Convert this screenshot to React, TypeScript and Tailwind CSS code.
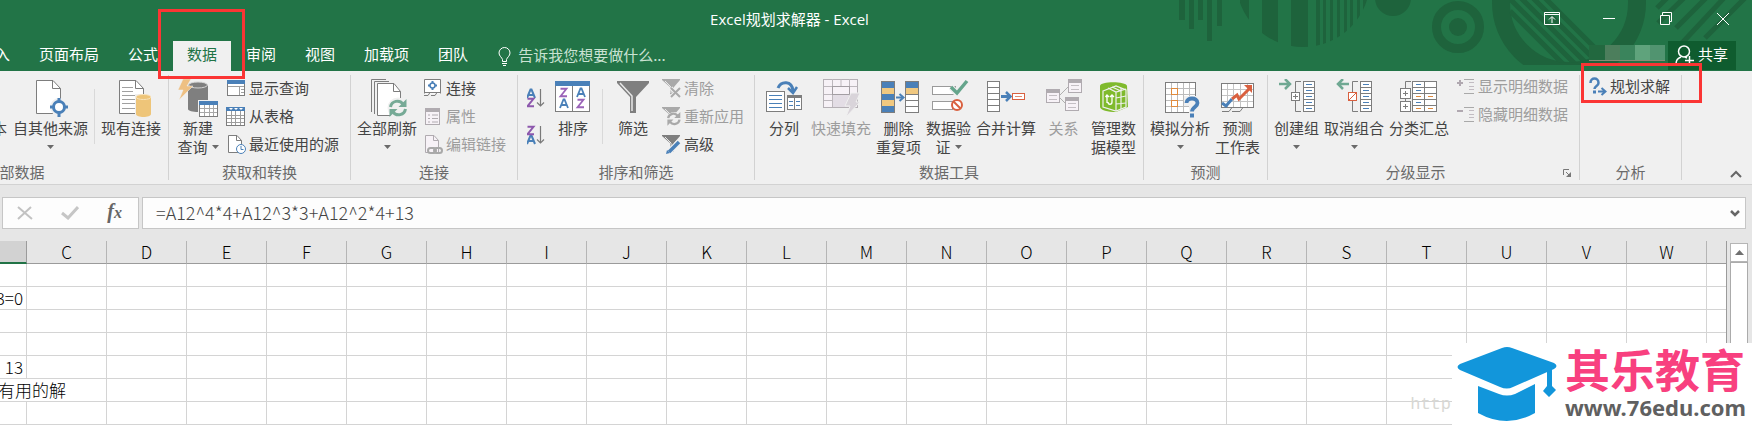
import type { ReactNode } from "react";

const GRAY = "#7d7d7d";
const BLUE = "#4a80b8";

/* ---------- large icons ---------- */

function Big({ children, w = 40 }: { children: ReactNode; w?: number }) {
  return (
    <svg width={w} height="39" viewBox={`0 0 ${w} 39`} fill="none" className="shrink-0" aria-hidden="true">
      {children}
    </svg>
  );
}

function TextFileIcon() {
  return (
    <Big>
      <path d="M12 20.500H27.500V37.500H12" fill="#fff" stroke={GRAY} />
      <path d="M12 25.500H25M12 29.500H25M12 33.500H25" stroke="#a5a5a5" />
    </Big>
  );
}

function OtherSourcesIcon() {
  return (
    <Big w={36}>
      <path d="M4.500 1.500H21L28.500 9.500V34.500H4.500Z" fill="#fff" stroke={GRAY} />
      <path d="M20.500 1.500V9.500H28.500" stroke={GRAY} />
      <circle cx="27" cy="28" r="9" fill="#f0f0f0" />
      <circle cx="27" cy="28" r="5.500" fill="#fff" stroke={BLUE} strokeWidth="3" />
      <path d="M27 19v4M27 33v5M18 28h4M32 28h4" stroke={BLUE} strokeWidth="3" />
    </Big>
  );
}

function ExistingIcon() {
  return (
    <Big>
      <path d="M8.500 1.500H25L32.500 9.500V34.500H8.500Z" fill="#fff" stroke={GRAY} />
      <path d="M24.500 1.500V9.500H32.500" stroke={GRAY} />
      <path d="M11 8.500h11M11 12.500h11M11 16.500h19M11 20.500h14M11 24.500h13M11 29.500h13" stroke="#a0a0a0" />
      <path d="M24 15h16v24h-16z" fill="#f0f0f0" />
      <path d="M25 18v17c0 4 15 4 15 0V18z" fill="#eec579" />
      <ellipse cx="32.500" cy="18" rx="7.500" ry="2.500" fill="#eec579" stroke="#f8e3bb" />
    </Big>
  );
}

function NewQueryIcon() {
  return (
    <Big w={44}>
      <path d="M12 6v24c0 4 20 4 20 0V6z" fill="#7f7f7f" />
      <ellipse cx="22" cy="6" rx="9.500" ry="3" fill="#7f7f7f" stroke="#d5d5d5" />
      <path d="M7 0h8l-4 7h6L3 21l4-10H2z" fill="#eec083" stroke="#f0f0f0" strokeWidth="0.500" />
      <rect x="22" y="21" width="22" height="18" fill="#f0f0f0" />
      <rect x="23.500" y="22.500" width="18" height="15" fill="#fff" stroke={GRAY} />
      <path d="M23 22h19v4H23z" fill={BLUE} />
      <path d="M24 29.500h17M24 33.500h17M28.500 26v11M33.500 26v11M37.500 26v11" stroke="#a8a8a8" />
    </Big>
  );
}

function RefreshArrows({ color }: { color: string }) {
  return (
    <>
      <path d="M1.500 8A7 7 0 0 1 14 5" stroke={color} strokeWidth="3" />
      <path d="M16.500 10A7 7 0 0 1 4 13" stroke={color} strokeWidth="3" />
      <path d="M17.500 0v8h-8z" fill={color} />
      <path d="M0.500 18v-8h8z" fill={color} />
    </>
  );
}

function RefreshAllIcon() {
  return (
    <Big>
      <path d="M4.500 33V0.500H19M7.500 35V2.500H22" stroke={GRAY} />
      <path d="M10.500 4.500H27L33.500 12.500V36.500H10.500Z" fill="#fff" stroke={GRAY} />
      <path d="M26.500 4.500V12.500H33.500" stroke={GRAY} />
      <circle cx="31" cy="29" r="10.500" fill="#f0f0f0" />
      <g transform="translate(22 20)"><RefreshArrows color="#76aa96" /></g>
    </Big>
  );
}

const A_PATH = "M0 9L3.500 0.500H4.500L8 9M1.500 6H6.500";
const Z_PATH = "M0.500 0.750H6.500L0.500 8.250H7";

function SortIcon() {
  return (
    <Big w={36}>
      <rect x="0.500" y="2.500" width="34" height="30" fill="#fff" stroke={GRAY} />
      <path d="M0 2h35v5H0z" fill={BLUE} />
      <path d="M17.500 7v25" stroke={GRAY} />
      <g strokeWidth="1.800">
        <path d={Z_PATH} transform="translate(5 9)" stroke="#9a63b8" />
        <path d={A_PATH} transform="translate(5 20)" stroke={BLUE} />
        <path d={A_PATH} transform="translate(22 9)" stroke={BLUE} />
        <path d={Z_PATH} transform="translate(22 20)" stroke="#9a63b8" />
      </g>
    </Big>
  );
}

function FilterIcon() {
  return (
    <Big w={32}>
      <path d="M0 2h32v2L19 18v16h-6V18L0 4z" fill="#7f7f7f" />
      <path d="M3 4l12 13v15" stroke="#e8e8e8" strokeWidth="1.500" />
    </Big>
  );
}

function TextToColumnsIcon() {
  return (
    <Big>
      <path d="M14 9C17 2 28 1 29 12" stroke={BLUE} strokeWidth="3" />
      <path d="M24 9l5 5 4-6" stroke={BLUE} strokeWidth="2.500" />
      <rect x="2.500" y="12.500" width="18" height="20" fill="#fff" stroke={GRAY} />
      <path d="M5 16.500h13M5 20.500h13M5 24.500h13M5 28.500h13" stroke={BLUE} />
      <rect x="23.500" y="16.500" width="14" height="14" fill="#fff" stroke={GRAY} />
      <path d="M23 16h15v3H23zM30 19h1v12h-1z" fill={GRAY} />
      <path d="M25 22.500h4M32 22.500h4M25 26.500h4M32 26.500h4" stroke={BLUE} />
    </Big>
  );
}

function FlashFillIcon() {
  return (
    <Big>
      <rect x="2.500" y="0.500" width="34" height="28" fill="#f7f2f7" stroke="#b5b0b5" />
      <path d="M3 7.500h33M3 15.500h33M3 21.500h33M11.500 0v28M28.500 0v28M20 0v8" stroke="#bdb8bd" />
      <rect x="12" y="16" width="16" height="12" fill="#e3dde5" />
      <rect x="11.500" y="7.500" width="17" height="8" stroke="#a39ea3" />
      <path d="M30 14h9l-4 9h4L25 38l4-11h-5z" fill="#d9d4da" stroke="#f0f0f0" />
    </Big>
  );
}

function RemoveDuplicatesIcon() {
  return (
    <Big>
      <path d="M2 2h14v31H2z" fill={BLUE} />
      <path d="M3 9h12v6H3zM3 21h12v6H3z" fill="#f0c880" />
      <rect x="2.500" y="2.500" width="13" height="31" stroke={GRAY} />
      <rect x="26.500" y="2.500" width="13" height="31" fill="#fff" stroke={GRAY} />
      <path d="M27 3h12v6H27z" fill={BLUE} />
      <path d="M27 9h12v6H27z" fill="#f0c880" />
      <path d="M27 15.500h12M27 21.500h12M27 27.500h12" stroke={GRAY} />
      <path d="M17 18.500h6" stroke={BLUE} strokeWidth="2" />
      <path d="M20.500 15l4 3.500-4 3.500" stroke={BLUE} strokeWidth="2" />
    </Big>
  );
}

function ValidationIcon() {
  return (
    <Big>
      <rect x="3.500" y="7.500" width="23" height="8" fill="#fff" stroke="#9a9a9a" />
      <rect x="3.500" y="22.500" width="20" height="8" fill="#fff" stroke="#9a9a9a" />
      <path d="M22 8l6 7L38 2" stroke="#f0f0f0" strokeWidth="6" />
      <path d="M22 8l6 6L38 2" stroke="#65a58c" strokeWidth="3.500" />
      <circle cx="28" cy="26" r="5" fill="#fff" stroke="#d9603f" strokeWidth="2" />
      <path d="M24.500 22.500l7 7" stroke="#d9603f" strokeWidth="2" />
    </Big>
  );
}

function ConsolidateIcon() {
  return (
    <Big>
      <rect x="1.500" y="2.500" width="12" height="30" fill="#fff" stroke={GRAY} />
      <path d="M2 8.500h11M2 14.500h11M2 20.500h11M2 26.500h11" stroke={GRAY} />
      <path d="M15 17.500h8" stroke={BLUE} strokeWidth="3" />
      <path d="M20 13l4.500 4.500L20 22" stroke={BLUE} strokeWidth="2.500" />
      <rect x="26.500" y="14.500" width="12" height="6" fill="#fff" stroke="#d9603f" />
      <path d="M29 17.500h7" stroke="#e28a70" />
    </Big>
  );
}

function RelationsIcon() {
  return (
    <Big>
      <path d="M15 17l9-9M15 18l7 7" stroke="#b0b0b0" />
      {["translate(2 10)", "translate(24 0)", "translate(21 18)"].map((t) => (
        <g key={t} transform={t}>
          <rect x="0.500" y="0.500" width="13" height="13" fill="#f7f2f7" stroke="#b0abb0" />
          <path d="M0 0h14v4H0z" fill="#b0abb0" />
          <path d="M3 6.500h8M3 10.500h8" stroke="#c4bfc4" />
        </g>
      ))}
    </Big>
  );
}

function DataModelIcon() {
  return (
    <Big>
      <path d="M6 7c0-5 26-5 27 0l1 21-12 5c-8 0-16-2-16-5z" fill="#7fba2c" />
      <path d="M9 12l13-5 10 4v17l-10 4-13-4z" stroke="#f0f0f0" strokeWidth="1.200" />
      <path d="M22 13v19M22 19l10-2M22 25l10-1M27 9v21M14 9l8 4 10-3M18 8l9 4" stroke="#f0f0f0" strokeWidth="1.200" />
      <path d="M13 16v8M11.500 18l1.500-2 2 2M18 16v7c0 3-4 3-4 0M16 18l2-2 2 2" stroke="#fff" strokeWidth="1.300" />
    </Big>
  );
}

function WhatIfIcon() {
  return (
    <Big>
      <rect x="5.500" y="3.500" width="30" height="30" fill="#fff" stroke={GRAY} />
      <path d="M11.500 4v29M17.500 4v29M23.500 4v29M29.500 4v29M6 9.500h29M6 15.500h29M6 21.500h29M6 27.500h29" stroke="#bcbcbc" />
      <rect x="11.500" y="9.500" width="6" height="6" fill="#fff" stroke="#e08a3c" />
      <rect x="11.500" y="21.500" width="6" height="6" fill="#fff" stroke="#e08a3c" />
      <path d="M24 17h16v22H29V27h-5z" fill="#f0f0f0" />
      <path d="M26.500 24c0-6 11-6 11 0 0 4-5.500 4-5.500 8.500" stroke={BLUE} strokeWidth="3.800" />
      <path d="M30 34.500h4v4h-4z" fill={BLUE} />
    </Big>
  );
}

function ForecastIcon() {
  return (
    <Big>
      <rect x="3.500" y="4.500" width="32" height="24" fill="#fff" stroke={GRAY} />
      <path d="M9.500 5v23M15.500 5v23M22.500 5v23M29.500 5v23M4 10.500h31M4 16.500h31M4 22.500h31" stroke="#c4c4c4" />
      <path d="M4 32.500h7l3-4M14 32.500h8l3-4" stroke={GRAY} />
      <path d="M4 24l4 3 6-7" stroke={BLUE} strokeWidth="3" />
      <path d="M14 20l5-4 2 4L32 9" stroke="#d9603f" strokeWidth="3" />
      <path d="M26 6h8v8z" fill="#d9603f" />
    </Big>
  );
}

function OutlineIcon({ ungroup = false }: { ungroup?: boolean }) {
  return (
    <Big>
      <path d={ungroup ? "M4 5h11M9 0L4 5l5 5" : "M2 5h11M8 0l5 5-5 5"} stroke="#6fa892" strokeWidth="2.500" />
      <path d="M24 2.500h-5.500v30H24" stroke={GRAY} />
      <rect x="14.500" y="13.500" width="8" height="8" fill="#fff" stroke={ungroup ? "#d9603f" : GRAY} />
      <path d={ungroup ? "M15 21l7-7" : "M16 17.500h5M18.500 15v5"} stroke={ungroup ? "#d9603f" : GRAY} />
      <rect x="26.500" y="2.500" width="11" height="30" fill="#fff" stroke={GRAY} />
      <path d="M27 8.500h10M27 14.500h10M27 20.500h10M27 26.500h10" stroke={GRAY} />
      <path d="M29 5.500h6M29 11.500h6M29 17.500h6M29 23.500h6M29 29.500h6" stroke={BLUE} />
    </Big>
  );
}

function SubtotalIcon() {
  return (
    <Big>
      <path d="M12 2.500H6.500v7M6.500 19v4" stroke={GRAY} />
      <rect x="1.500" y="9.500" width="10" height="10" fill="#fff" stroke={GRAY} />
      <rect x="1.500" y="22.500" width="10" height="10" fill="#fff" stroke={GRAY} />
      <path d="M4 14.500h5M6.500 12v5M4 27.500h5M6.500 25v5" stroke={GRAY} />
      <rect x="13.500" y="2.500" width="24" height="30" fill="#fff" stroke={GRAY} />
      <path d="M14 8.500h23M14 14.500h23M14 20.500h23M14 26.500h23M25.500 3v29" stroke={GRAY} />
      <path d="M17 5.500h5M17 11.500h5M17 23.500h5" stroke={BLUE} />
      <path d="M17 17.500h5M29 17.500h5M17 29.500h5M29 29.500h5" stroke="#e08a3c" />
    </Big>
  );
}

/* ---------- small icons ---------- */

function Small({ children, w = 20 }: { children: ReactNode; w?: number }) {
  return (
    <svg width={w} height="20" viewBox={`0 0 ${w} 20`} fill="none" className="shrink-0" aria-hidden="true">
      {children}
    </svg>
  );
}

function ShowQueriesIcon() {
  return (
    <Small>
      <rect x="1.500" y="1.500" width="17" height="15" fill="#fff" stroke={GRAY} />
      <path d="M1 1h18v4H1z" fill={BLUE} />
      <path d="M13.500 8v8M2 7.500h16" stroke="#a0a0a0" />
      <path d="M15 10.500h3M15 13.500h3" stroke="#a0a0a0" />
    </Small>
  );
}

function FromTableIcon() {
  return (
    <Small>
      <rect x="0.500" y="0.500" width="18" height="18" fill="#fff" stroke={GRAY} />
      <path d="M0 0h19v4H0z" fill={BLUE} />
      <path d="M3 1h4L5 3zM8 1h4l-2 2zM13 1h4l-2 2z" fill="#fff" />
      <path d="M5.500 4v14M9.500 4v14M14.500 4v14M1 8.500h17M1 11.500h17M1 15.500h17" stroke="#9d9d9d" />
    </Small>
  );
}

function RecentIcon() {
  return (
    <Small>
      <path d="M2.500 0.500H11L15.500 5.500V17.500H2.500Z" fill="#fff" stroke={GRAY} />
      <path d="M10.500 0.500V5.500H15.500" stroke={GRAY} />
      <circle cx="15" cy="14" r="4.500" fill="#fff" stroke={BLUE} />
      <path d="M15 11v3.500h2.500" stroke={BLUE} />
    </Small>
  );
}

function ConnectionsIcon() {
  return (
    <Small>
      <path d="M1.500 14.500V0.500h16v14" fill="#fff" stroke={GRAY} />
      <path d="M1 16.500h4l2-3M8 16.500h4l2-3M1 13.500h17" stroke={GRAY} />
      <circle cx="9.500" cy="6.500" r="2.500" stroke={BLUE} strokeWidth="1.500" />
      <path d="M9.500 2v2M9.500 9v2M5 6.500h2M12 6.500h2" stroke={BLUE} strokeWidth="2" />
    </Small>
  );
}

function PropertiesIcon() {
  return (
    <Small>
      <rect x="2.500" y="1.500" width="14" height="16" fill="#f7f2f7" stroke="#b0abb0" />
      <path d="M2 1h15v4H2z" fill="#b0abb0" />
      <path d="M5 8h2M5 11.500h2M5 15h2M9 8h6M9 11.500h6M9 15h6" stroke="#b0abb0" />
    </Small>
  );
}

function EditLinksIcon() {
  return (
    <Small>
      <path d="M2.500 0.500H11L15.500 5.500V17.500H2.500Z" fill="#f7f2f7" stroke="#b0abb0" />
      <path d="M10.500 0.500V5.500H15.500" stroke="#b0abb0" />
      <rect x="5" y="13" width="8" height="5" rx="2.500" stroke="#a9a9a9" strokeWidth="2" />
      <rect x="11" y="13" width="8" height="5" rx="2.500" stroke="#a9a9a9" strokeWidth="2" />
    </Small>
  );
}

function SmallFunnel({ color }: { color: string }) {
  return (
    <>
      <path d="M1 0h18v1l-6 7v9l-4-2V8L1 1z" fill={color} />
      <path d="M4 2l6 6v6" stroke="#e8e8e8" />
    </>
  );
}

function ClearIcon() {
  return (
    <Small>
      <SmallFunnel color="#a9a9a9" />
      <path d="M10 9l9 9M19 9l-9 9" stroke="#f0f0f0" strokeWidth="4" />
      <path d="M10 9l9 9M19 9l-9 9" stroke="#a9a9a9" strokeWidth="2" />
    </Small>
  );
}

function ReapplyIcon() {
  return (
    <Small>
      <SmallFunnel color="#a9a9a9" />
      <circle cx="13" cy="12" r="7" fill="#f0f0f0" />
      <g transform="translate(6 5) scale(.76)"><RefreshArrows color="#a9a9a9" /></g>
    </Small>
  );
}

function AdvancedIcon() {
  return (
    <Small>
      <SmallFunnel color="#7f7f7f" />
      <path d="M7 18L18 7" stroke="#f0f0f0" strokeWidth="6" />
      <path d="M8 17L18 7" stroke={BLUE} strokeWidth="3.500" />
      <path d="M5 19l1-4 3 3z" fill={BLUE} />
    </Small>
  );
}

function DetailIcon({ minus = false }: { minus?: boolean }) {
  return (
    <Small w={18}>
      <path d={minus ? "M0 6h6" : "M0 6h6M3 3v6"} stroke="#b0a8b0" strokeWidth="2" />
      <path d="M7 2.500h10M7 16.500h10" stroke="#a9a9a9" />
      <path d="M12 5.500h5M12 9.500h5M12 12.500h5" stroke="#c2bcc2" />
    </Small>
  );
}

function SolverIcon() {
  return (
    <Small w={18}>
      <path d="M1.500 6c0-6 8-6 8 0 0 3-4 3-4 6" stroke={BLUE} strokeWidth="2.500" />
      <path d="M4 13.500h3v3H4z" fill={BLUE} />
      <path d="M9 14.500h6M12.500 11l4 3.500-4 3.500" stroke={BLUE} strokeWidth="2" />
    </Small>
  );
}

function SortOrderIcon({ desc = false }: { desc?: boolean }) {
  return (
    <svg width="18" height="20" viewBox="0 0 18 20" fill="none" aria-hidden="true">
      <g strokeWidth="2">
        <path d={A_PATH} transform={desc ? "translate(0 10)" : "translate(0 1)"} stroke={BLUE} />
        <path d={Z_PATH} transform={desc ? "translate(0 1)" : "translate(0 10)"} stroke="#8d58ad" />
      </g>
      <path d="M13.500 1v17M10 14.500l3.500 3.500 3.500-3.500" stroke="#7a7a7a" strokeWidth="1.200" />
    </svg>
  );
}

/* ---------- ribbon parts ---------- */

function Caret() {
  return (
    <svg width="7" height="4" viewBox="0 0 7 4" aria-hidden="true">
      <path d="M0 0h7L3.500 4z" fill="#6a6a6a" />
    </svg>
  );
}

type BigButtonProps = { icon: ReactNode; lines: [string, string?]; menu?: boolean; disabled?: boolean; className?: string };

function BigButton({ icon, lines, menu, disabled, className = "" }: BigButtonProps) {
  return (
    <button
      type="button"
      disabled={disabled}
      className={`flex shrink-0 flex-col items-center pt-2 text-[15px] leading-[19px] whitespace-nowrap text-[#444] disabled:text-[#9d9d9d] ${className}`}
    >
      {icon}
      <span>{lines[0]}</span>
      <span className="flex h-[19px] items-center gap-1">
        {lines[1]}
        {menu && <Caret />}
      </span>
    </button>
  );
}

function SmallButton({ icon, label, disabled }: { icon: ReactNode; label: string; disabled?: boolean }) {
  return (
    <button
      type="button"
      disabled={disabled}
      className="flex h-7 items-center gap-[3px] text-[15px] leading-[19px] whitespace-nowrap text-[#444] disabled:text-[#9d9d9d]"
    >
      {icon}
      <span className="pb-[3px]">{label}</span>
    </button>
  );
}

function Group({ label, className, children, launcher }: { label: string; className: string; children: ReactNode; launcher?: boolean }) {
  return (
    <section aria-label={label} className={`flex shrink-0 flex-col ${className}`}>
      <div className="flex h-[89px] items-start">{children}</div>
      <div className="flex h-6 items-center pb-px">
        <h2 className="flex-1 text-center text-[15px] leading-[19px] text-[#6a6a6a]">{label}</h2>
        {launcher && (
          <button type="button" aria-label="对话框启动器" className="w-4 pt-1">
            <svg width="9" height="9" viewBox="0 0 9 9" fill="none">
              <path d="M0.500 6V0.500H6M3 3l4 4" stroke="#777" />
              <path d="M8 3v5H3z" fill="#777" />
            </svg>
          </button>
        )}
      </div>
    </section>
  );
}

function Separator() {
  return <div className="mt-1 h-[105px] w-px shrink-0 bg-[#d2d2d2]" />;
}

function InnerSeparator({ className }: { className: string }) {
  return <div className={`mt-[18px] h-[55px] w-px shrink-0 bg-[#d9d9d9] ${className}`} />;
}

function Ribbon() {
  return (
    <div className="flex h-[114px] border-b border-[#d2d2d2] bg-[#f0f0f0]">
      <Group label="获取外部数据" className="-ml-[169px] w-[337px] [&>div:first-child]:justify-end">
        <BigButton icon={<TextFileIcon />} lines={["自文本"]} className="mr-1.5" />
        <BigButton icon={<OtherSourcesIcon />} lines={["自其他来源"]} menu />
        <InnerSeparator className="mx-1.5" />
        <BigButton icon={<ExistingIcon />} lines={["现有连接"]} className="mr-[7px]" />
      </Group>
      <Separator />
      <Group label="获取和转换" className="w-[181px]">
        <BigButton icon={<NewQueryIcon />} lines={["新建", "查询"]} menu className="ml-[7px]" />
        <div className="mt-1 ml-1.5">
          <SmallButton icon={<ShowQueriesIcon />} label="显示查询" />
          <SmallButton icon={<FromTableIcon />} label="从表格" />
          <SmallButton icon={<RecentIcon />} label="最近使用的源" />
        </div>
      </Group>
      <Separator />
      <Group label="连接" className="w-[166px]">
        <BigButton icon={<RefreshAllIcon />} lines={["全部刷新"]} menu className="ml-1.5" />
        <div className="mt-1 ml-1.5">
          <SmallButton icon={<ConnectionsIcon />} label="连接" />
          <SmallButton icon={<PropertiesIcon />} label="属性" disabled />
          <SmallButton icon={<EditLinksIcon />} label="编辑链接" disabled />
        </div>
      </Group>
      <Separator />
      <Group label="排序和筛选" className="w-[236px]">
        <div className="mt-[17px] ml-[9px] flex w-[18px] flex-col gap-[17px]">
          <button type="button" aria-label="升序"><SortOrderIcon /></button>
          <button type="button" aria-label="降序"><SortOrderIcon desc /></button>
        </div>
        <BigButton icon={<SortIcon />} lines={["排序"]} className="ml-2.5" />
        <InnerSeparator className="mr-3.5 ml-[11px]" />
        <BigButton icon={<FilterIcon />} lines={["筛选"]} />
        <div className="mt-1 ml-3">
          <SmallButton icon={<ClearIcon />} label="清除" disabled />
          <SmallButton icon={<ReapplyIcon />} label="重新应用" disabled />
          <SmallButton icon={<AdvancedIcon />} label="高级" />
        </div>
      </Group>
      <Separator />
      <Group label="数据工具" className="w-[388px] [&>div:first-child]:gap-[5px] [&>div:first-child]:pl-[7px]">
        <BigButton icon={<TextToColumnsIcon />} lines={["分列"]} className="w-11" />
        <BigButton icon={<FlashFillIcon />} lines={["快速填充"]} disabled />
        <BigButton icon={<RemoveDuplicatesIcon />} lines={["删除", "重复项"]} />
        <BigButton icon={<ValidationIcon />} lines={["数据验", "证"]} menu />
        <BigButton icon={<ConsolidateIcon />} lines={["合并计算"]} />
        <BigButton icon={<RelationsIcon />} lines={["关系"]} disabled className="w-[45px]" />
        <BigButton icon={<DataModelIcon />} lines={["管理数", "据模型"]} />
      </Group>
      <Separator />
      <Group label="预测" className="w-[123px] [&>div:first-child]:gap-[5px] [&>div:first-child]:pl-1.5">
        <BigButton icon={<WhatIfIcon />} lines={["模拟分析"]} menu />
        <BigButton icon={<ForecastIcon />} lines={["预测", "工作表"]} />
      </Group>
      <Separator />
      <Group label="分级显示" launcher className="w-[311px] [&>div:first-child]:gap-[5px] [&>div:first-child]:pl-1.5">
        <BigButton icon={<OutlineIcon />} lines={["创建组"]} menu />
        <BigButton icon={<OutlineIcon ungroup />} lines={["取消组合"]} menu />
        <BigButton icon={<SubtotalIcon />} lines={["分类汇总"]} />
        <div className="mt-0.5 ml-[3px]">
          <SmallButton icon={<DetailIcon />} label="显示明细数据" disabled />
          <SmallButton icon={<DetailIcon minus />} label="隐藏明细数据" disabled />
        </div>
      </Group>
      <Separator />
      <Group label="分析" className="w-[101px]">
        <div className="relative mt-0.5 ml-[9px]">
          <SmallButton icon={<SolverIcon />} label="规划求解" />
          <div className="pointer-events-none absolute -top-2.5 -right-8 -bottom-0.5 -left-2 z-10 border-3 border-[#fb3534]" />
        </div>
      </Group>
      <Separator />
      <div className="flex flex-1 items-end justify-end pr-2.5 pb-1.5">
        <button type="button" aria-label="折叠功能区">
          <svg width="12" height="8" viewBox="0 0 12 8" fill="none">
            <path d="M1 7l5-5 5 5" stroke="#666" strokeWidth="2" />
          </svg>
        </button>
      </div>
    </div>
  );
}

/* ---------- title bar and tabs ---------- */

const circleStripes = [
  [80, 9], [102, 16], [131, 17], [156, 4], [163, 3], [170, 3], [177, 3], [184, 3], [190, 3], [197, 3], [203, 4],
];

function HeaderArt() {
  return (
    <svg width="592" height="71" viewBox="0 0 592 71" className="pointer-events-none absolute top-0 right-0" aria-hidden="true">
      <defs>
        <clipPath id="disc"><circle cx="143" cy="-20" r="67" /></clipPath>
        <clipPath id="hole"><circle cx="409" cy="3" r="60" /></clipPath>
        <clipPath id="band"><path d="M320 0h272v65H320z" /></clipPath>
      </defs>
      <g fill="#1e633c">
        <path d="M19 0h6v20h-6zM29 0h5v29h-5zM38 0h5v20h-5zM47 0h5v41h-5zM57 0h5v26h-5z" />
        <g clipPath="url(#disc)">
          {circleStripes.map(([x, w]) => (
            <rect key={x} x={x} y="0" width={w} height="50" />
          ))}
        </g>
        <circle cx="233" cy="-2" r="18" />
        <circle cx="298" cy="27" r="9" />
      </g>
      <circle cx="298" cy="27" r="21.500" fill="none" stroke="#1e633c" strokeWidth="9" />
      <g clipPath="url(#band)" fill="none" stroke="#1e633c">
        <circle cx="409" cy="3" r="68" strokeWidth="18" />
        <path d="M350 11L415 76M350 -1L425 74M352 -11L432 69M364 -11L440 65M377 -10L450 63" strokeWidth="5" clipPath="url(#hole)" />
        <path d="M497 8l10-10M498 23l26-25M516 28l30-30M522 43l42-45M545 38l40-40" strokeWidth="5" />
      </g>
    </svg>
  );
}

const tabs = ["插入", "页面布局", "公式", "数据", "审阅", "视图", "加载项", "团队"];

function Header() {
  return (
    <header className="relative bg-[#227447] text-white">
      <HeaderArt />
      <div className="relative flex h-[41px]">
        <h1 className="flex-1 pt-[9px] pl-14 text-center font-['Open_Sans','Noto_Sans_CJK_SC',sans-serif] text-[15px] leading-5">
          Excel规划求解器 - Excel
        </h1>
        <div className="flex pr-px pb-1">
          <button type="button" aria-label="功能区显示选项" className="flex w-[57px] items-center justify-center">
            <svg width="16" height="13" viewBox="0 0 16 13" fill="none" stroke="#fff">
              <path d="M0.500 0.500h15v12h-15zM0 2.500h16M8 11V5M5 7.500l3-3 3 3" />
            </svg>
          </button>
          <button type="button" aria-label="最小化" className="flex w-[57px] items-center justify-center">
            <svg width="12" height="1"><path d="M0 0h12v1H0z" fill="#fff" /></svg>
          </button>
          <button type="button" aria-label="还原" className="flex w-[57px] items-center justify-center">
            <svg width="12" height="13" viewBox="0 0 12 13" fill="none" stroke="#fff">
              <path d="M0.500 3.500h9v9h-9zM2.500 3V0.500h9v9H10" />
            </svg>
          </button>
          <button type="button" aria-label="关闭" className="flex w-[57px] items-center justify-center">
            <svg width="12" height="12" viewBox="0 0 12 12" fill="none" stroke="#fff"><path d="M0 0l12 12M12 0L0 12" /></svg>
          </button>
        </div>
      </div>
      <div className="relative flex h-[30px]">
        <nav className="-ml-[34px] flex gap-px text-[15px] leading-[25px]">
          {tabs.map((t) =>
            t === "数据" ? (
              <button key={t} type="button" className="relative bg-[#f0f0f0] px-3.5 pb-[5px] text-[#217346]">
                {t}
                <span className="pointer-events-none absolute -top-8 -right-3.5 -bottom-2 -left-[15px] z-10 border-3 border-[#fb3534]" />
              </button>
            ) : (
              <button key={t} type="button" className="px-3.5 pb-[5px]">{t}</button>
            ),
          )}
        </nav>
        <label className="ml-4 flex items-center gap-[7px]">
          <svg width="13" height="19" viewBox="0 0 13 19" fill="none" stroke="#fff">
            <path d="M4.500 14.500v-2C4 10.500 1 9 1 6a5.500 5.500 0 0 1 11 0c0 3-3 4.500-3.500 6.500v2zM4 16.500h5M5 18.500h3" />
          </svg>
          <input
            type="text"
            placeholder="告诉我您想要做什么..."
            className="w-60 bg-transparent pb-0.5 text-[15px] outline-none placeholder:text-[#c9e2d2] placeholder:opacity-100"
          />
        </label>
        <div className="mr-4 ml-auto flex gap-[3px]">
          <div className="mt-1 flex h-4 border-b border-[#8f8a74]">
            <div className="w-4 bg-[#22683f]" />
            <div className="w-[15px] bg-[#4c7e5c]" />
            <div className="w-[15px] bg-[#3a845c]" />
            <div className="w-[15px] bg-[#5fa37c]" />
            <div className="w-[15px] bg-[#519470]" />
          </div>
          <button type="button" className="mb-px flex w-[68px] items-center gap-1 bg-[#0f5c2f] pb-0.5 pl-[7px] text-[15px]">
            <svg width="19" height="19" viewBox="0 0 19 19" fill="none" stroke="#fff" strokeWidth="1.500">
              <circle cx="9" cy="6.500" r="5.500" />
              <path d="M1 19c0-4 2-6 5-7M10 12l2 1M10 15.500h9M14.500 11v8" />
            </svg>
            共享
          </button>
        </div>
      </div>
    </header>
  );
}

/* ---------- formula bar ---------- */

function FormulaBar() {
  return (
    <div className="flex h-14 items-start gap-[3px] pt-3 pr-[6px] pl-[2px]">
      <div className="flex h-8 w-[137px] shrink-0 items-center justify-between border border-[#c6c6c6] bg-[#fdfdfd] pr-4 pl-3.5">
        <button type="button" aria-label="取消">
          <svg width="16" height="14" viewBox="0 0 16 14" fill="none"><path d="M1 1l14 12M14 1L1 13" stroke="#c2c2c2" strokeWidth="2" /></svg>
        </button>
        <button type="button" aria-label="输入">
          <svg width="18" height="14" viewBox="0 0 18 14" fill="none"><path d="M1 7l6 5L17 1" stroke="#c6c6c6" strokeWidth="3" /></svg>
        </button>
        <button type="button" aria-label="插入函数" className="pb-0.5 font-['Liberation_Serif',serif] text-[20px] leading-5 font-bold text-[#666] italic">
          f<span className="text-[16px]">x</span>
        </button>
      </div>
      <div className="flex h-8 flex-1 items-center border border-[#c6c6c6] bg-[#fdfdfd] pr-[5px]">
        <input
          type="text"
          aria-label="编辑栏"
          defaultValue="=A12^4*4+A12^3*3+A12^2*4+13"
          className="h-full flex-1 bg-transparent pb-[3px] pl-[13px] text-[18px] font-light text-[#444] outline-none"
        />
        <button type="button" aria-label="展开编辑栏">
          <svg width="10" height="7" viewBox="0 0 10 7" fill="none"><path d="M1 1l4 4 4-4" stroke="#666" strokeWidth="2.500" /></svg>
        </button>
      </div>
    </div>
  );
}

/* ---------- sheet ---------- */

const columns = "CDEFGHIJKLMNOPQRSTUVW".split("");
const rows = ["", "3=0", "", "", "13", "有用的解", ""];

function Sheet() {
  return (
    <div className="flex">
      <div className="min-w-0 flex-1 overflow-hidden border-r border-[#9b9b9b]">
        <table className="w-full table-fixed border-separate border-spacing-0 text-[17px] leading-5 font-light text-black">
          <colgroup>
            <col className="w-[27px]" />
            {columns.map((c) => (
              <col key={c} className="w-20" />
            ))}
            <col />
          </colgroup>
          <thead>
            <tr className="h-[23px] bg-[#e6e6e6]">
              <th className="border-r border-b-2 border-r-[#9b9b9b] border-b-[#217346] bg-[#d2d2d2] p-0" />
              {columns.map((c) => (
                <th key={c} scope="col" className="border-r border-b border-r-[#b5b5b5] border-b-[#9b9b9b] p-0 font-light">
                  {c}
                </th>
              ))}
              <th className="border-b border-[#9b9b9b] p-0" />
            </tr>
          </thead>
          <tbody>
            {rows.map((value, i) => (
              <tr key={i} className="h-[23px] bg-white">
                <td className={`border-b border-[#d4d4d4] p-0 ${value === "有用的解" ? "" : "border-r"}`}>
                  <div className={`flex whitespace-nowrap ${value === "有用的解" ? "-ml-0.5" : "justify-end pr-[3px]"}`}>
                    {value}
                  </div>
                </td>
                {columns.map((c) => (
                  <td key={c} className="border-r border-b border-[#d4d4d4] p-0" />
                ))}
                <td className="border-b border-[#d4d4d4] p-0" />
              </tr>
            ))}
          </tbody>
        </table>
      </div>
      <div className="flex w-[25px] shrink-0 flex-col pt-[2px] pr-1 pl-[3px]">
        <button type="button" aria-label="向上滚动" className="flex h-[19px] items-center justify-center border border-[#b5b5b5] bg-white">
          <svg width="9" height="5" viewBox="0 0 9 5"><path d="M0 5h9L4.500 0z" fill="#707070" /></svg>
        </button>
        <div className="flex-1 border border-[#ababab] bg-white" />
      </div>
    </div>
  );
}

function Watermark() {
  return (
    <>
      <span className="absolute right-[301px] bottom-2 font-['Liberation_Mono',monospace] text-[17px] leading-6 text-[#d8d8d4]">http</span>
      <div className="absolute right-0 bottom-0 flex h-[82px] w-[300px] bg-white pl-[5px]">
        <svg width="100" height="82" viewBox="0 0 100 82" className="shrink-0" aria-hidden="true">
          <path d="M45 5Q50 3 55 5L97 20Q102 23 97 26L56 44Q50 47 43 44L3 27Q-2 24 3 21Z" fill="#1296db" />
          <path d="M21 43L42 51Q50 54 58 51L78 41V70Q50 86 21 70Z" fill="#1296db" />
          <path d="M90 26h5v17l4 4-7 7-6-6 4-5z" fill="#1296db" />
        </svg>
        <div className="pl-2">
          <p className="text-[45px] leading-[52px] font-bold whitespace-nowrap text-[#f8407f]">其乐教育</p>
          <p className="font-['Noto_Sans',sans-serif] text-[22px] leading-6 font-bold text-[#606060]">www.76edu.com</p>
        </div>
      </div>
    </>
  );
}

export default function App() {
  return (
    <div className="relative overflow-hidden bg-[#e6e6e6] font-['Noto_Sans_CJK_SC',sans-serif]">
      <Header />
      <Ribbon />
      <FormulaBar />
      <Sheet />
      <Watermark />
    </div>
  );
}
